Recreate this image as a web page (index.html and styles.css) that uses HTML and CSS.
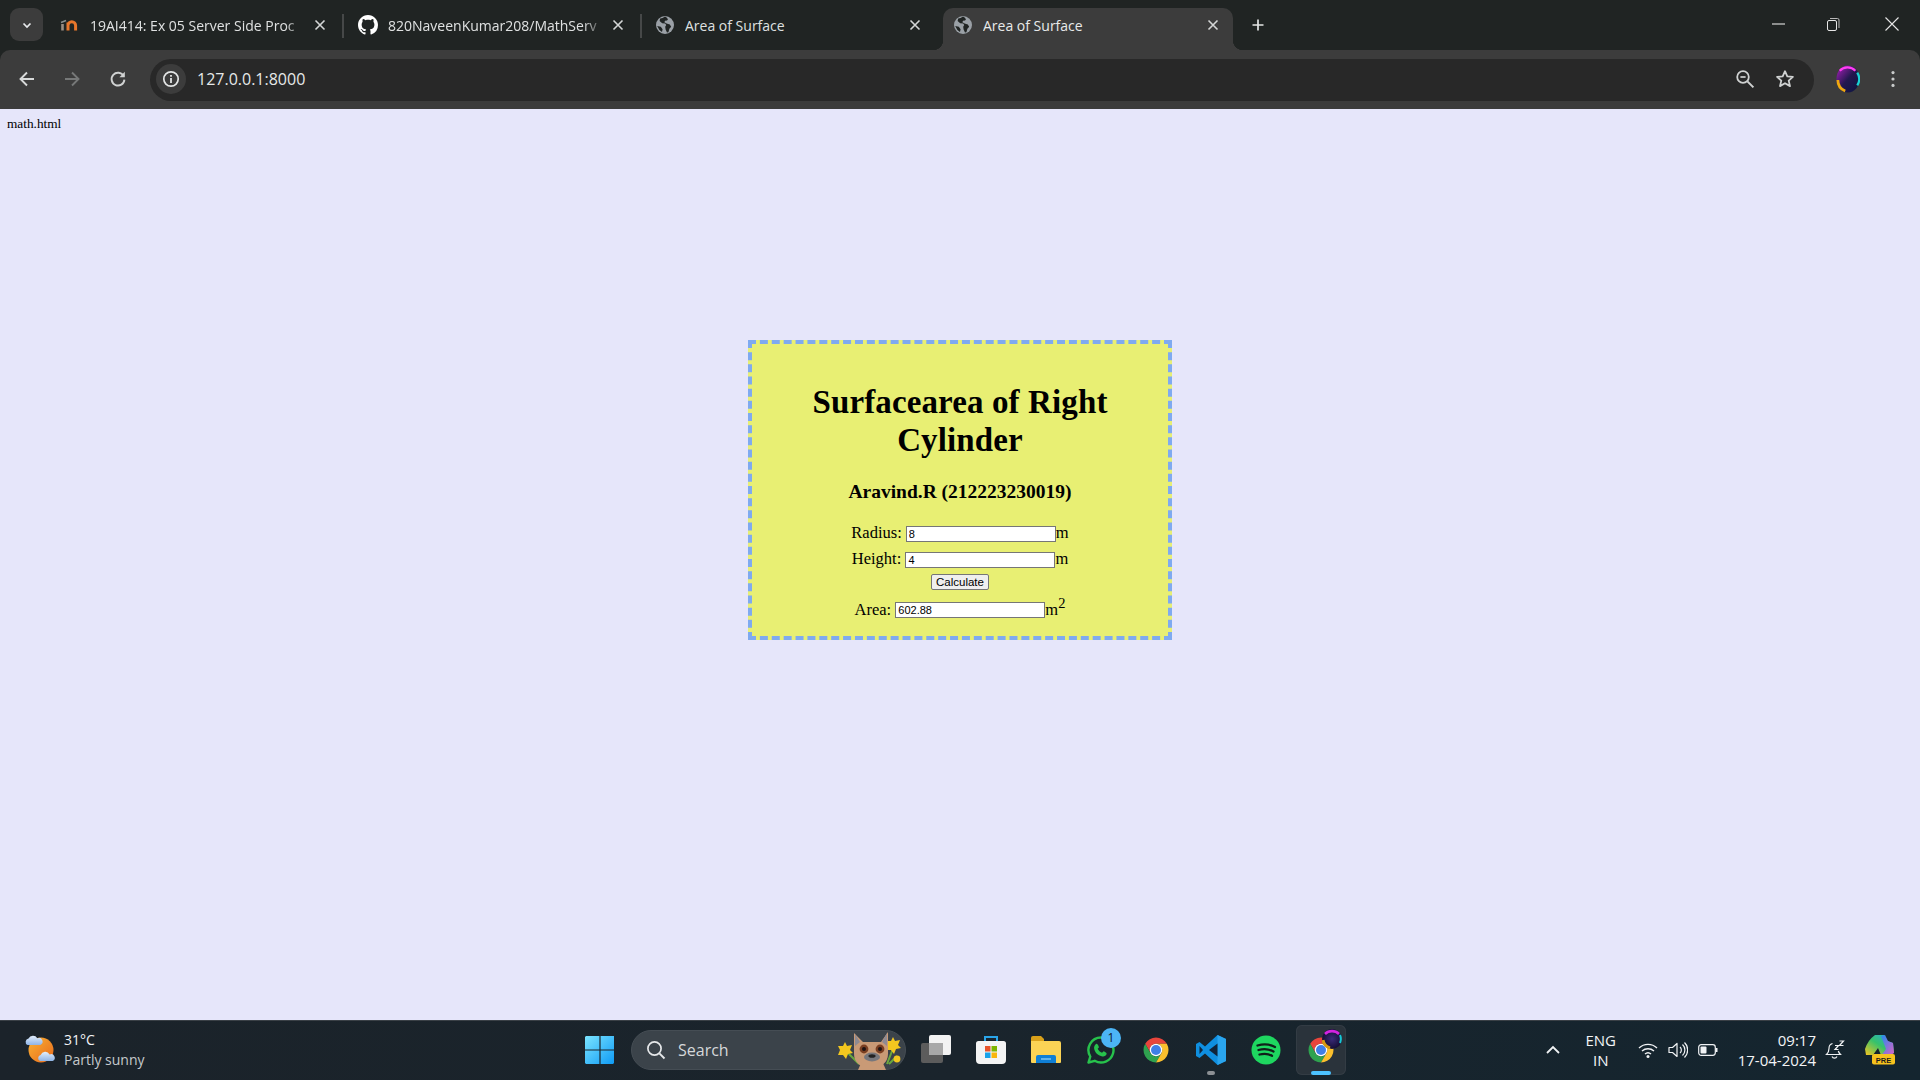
FILE: index.html
```html
<!DOCTYPE html>
<html lang="en">
<head>
<meta charset="utf-8">
<title>Area of Surface</title>
<link rel="stylesheet" href="styles.css">
</head>
<body>
<svg class="defs" width="0" height="0">
  <symbol id="chrome" viewBox="0 0 48 48">
    <path fill="#e8453c" d="M6.68 14A20 20 0 0 1 41.32 14H24A10 10 0 0 0 15.34 29z"/>
    <path fill="#2fa24f" d="M6.68 14A20 20 0 0 0 24 44L32.66 29A10 10 0 0 1 15.34 29z"/>
    <path fill="#fbc02d" d="M24 44A20 20 0 0 0 41.32 14H24A10 10 0 0 1 32.66 29z"/>
    <circle cx="24" cy="24" r="10" fill="#fff"/>
    <circle cx="24" cy="24" r="8" fill="#3f7fe8"/>
  </symbol>
  <symbol id="globe" viewBox="0 0 20 20">
    <circle cx="10" cy="10" r="9" fill="#9aa0a6"/>
    <path fill="#202423" d="M10 1.6 7.6 3 5.2 3.4 4.6 6l2.6 2.2 3 .2 1 1.6-1 1.8.4 2.6 1.4 3.2 1.4-.4 1-3.4 1.8-2-1.4-2.4-3.2-1-2.2-1.2.6-1.4 2-.2 1-1.4-1.4-1.6zM2.2 11l3.6.8 1.8 2.4-.6 2.8L4.4 15z"/>
  </symbol>
  <symbol id="x" viewBox="0 0 14 14">
    <path d="M2.5 2.5l9 9M11.5 2.5l-9 9" fill="none" stroke="#d4d6d6" stroke-width="1.6"/>
  </symbol>
</svg>

<header class="tabstrip">
  <button class="tab-search" type="button">
    <svg class="ic12" viewBox="0 0 12 12"><path d="M2.5 4.5 6 8l3.500-3.500" fill="none" stroke="#e8eaed" stroke-width="1.7"/></svg>
  </button>
  <div class="tabs">
    <div class="tab tab-shift">
      <svg class="fav" viewBox="0 0 20 20"><path d="M2.500 15.500V9" stroke="#9a8f84" stroke-width="2.600" fill="none"/><path d="M8 15.500V7.500M8 10.500a3.800 3.800 0 0 1 7.600 0v5" stroke="#e8762b" stroke-width="3" fill="none"/><path d="M1 7.500 6 5.500" stroke="#8a8f8f" stroke-width="1.400"/></svg>
      <span class="tab-title tab-fade">19AI414: Ex 05 Server Side Proc</span>
      <svg class="tab-x"><use href="#x"/></svg>
    </div>
    <i class="tab-sep"></i>
    <div class="tab tab-shift">
      <svg class="fav" viewBox="0 0 16 16"><path fill="#fff" d="M8 0C3.58 0 0 3.58 0 8c0 3.54 2.29 6.53 5.47 7.59.4.07.55-.17.55-.38 0-.19-.01-.82-.01-1.49-2.01.37-2.53-.49-2.69-.94-.09-.23-.48-.94-.82-1.13-.28-.15-.68-.52-.01-.53.63-.01 1.08.58 1.23.82.72 1.21 1.87.87 2.33.66.07-.52.28-.87.51-1.07-1.78-.2-3.64-.89-3.64-3.95 0-.87.31-1.59.82-2.15-.08-.2-.36-1.02.08-2.12 0 0 .67-.21 2.2.82.64-.18 1.32-.27 2-.27.68 0 1.36.09 2 .27 1.53-1.04 2.2-.82 2.2-.82.44 1.1.16 1.92.08 2.12.51.56.82 1.27.82 2.15 0 3.07-1.87 3.75-3.65 3.95.29.25.54.73.54 1.48 0 1.07-.01 1.93-.01 2.2 0 .21.15.46.55.38A8.013 8.013 0 0016 8c0-4.42-3.58-8-8-8z"/></svg>
      <span class="tab-title tab-fade">820NaveenKumar208/MathServ</span>
      <svg class="tab-x"><use href="#x"/></svg>
    </div>
    <i class="tab-sep"></i>
    <div class="tab">
      <svg class="fav"><use href="#globe"/></svg>
      <span class="tab-title">Area of Surface</span>
      <svg class="tab-x"><use href="#x"/></svg>
    </div>
    <i class="tab-sep tab-sep-off"></i>
    <div class="tab tab-active">
      <svg class="fav"><use href="#globe"/></svg>
      <span class="tab-title">Area of Surface</span>
      <svg class="tab-x"><use href="#x"/></svg>
    </div>
  </div>
  <svg class="newtab" viewBox="0 0 16 16"><path d="M8 2.500v11M2.500 8h11" stroke="#e3e5e5" stroke-width="1.700" fill="none"/></svg>
  <div class="winctl">
    <svg class="win win-min" viewBox="0 0 16 16"><path d="M2 8h13" stroke="#e6e6e6" stroke-width="1.100"/></svg>
    <svg class="win win-max" viewBox="0 0 16 16"><rect x="2.500" y="4.500" width="9" height="10" rx="1.500" fill="none" stroke="#e6e6e6" stroke-width="1"/><path d="M5 2.500h7.500a1.500 1.500 0 0 1 1.500 1.500v8" fill="none" stroke="#b8b8b8" stroke-width="1"/></svg>
    <svg class="win win-close" viewBox="0 0 16 16"><path d="M1.500 1.500l13 13M14.500 1.500l-13 13" stroke="#e6e6e6" stroke-width="1.100"/></svg>
  </div>
</header>

<nav class="toolbar">
  <div class="nav-btn"><svg class="ic18" viewBox="0 0 18 18"><path d="M16 9H3M9 2.500 2.500 9 9 15.500" fill="none" stroke="#d7d9d9" stroke-width="1.900"/></svg></div>
  <div class="nav-btn"><svg class="ic18" viewBox="0 0 18 18"><path d="M2 9h13M9 2.500 15.500 9 9 15.500" fill="none" stroke="#767878" stroke-width="1.900"/></svg></div>
  <div class="nav-btn"><svg class="ic18" viewBox="0 0 18 18"><path d="M14.600 6A6.400 6.400 0 1 0 15.400 9.600" fill="none" stroke="#d0d2d2" stroke-width="1.900"/><path d="M15.800 1.800v5.400h-5.400z" fill="#d0d2d2"/></svg></div>
  <div class="omnibox">
    <div class="info-chip"><svg class="ic18" viewBox="0 0 18 18"><circle cx="9" cy="9" r="7.200" fill="none" stroke="#e3e5e5" stroke-width="1.700"/><path d="M9 8v5M9 5v1.800" stroke="#e3e5e5" stroke-width="1.800"/></svg></div>
    <span class="url">127.0.0.1:8000</span>
    <svg class="ic20 omni-zoom" viewBox="0 0 20 20"><circle cx="8" cy="8" r="5.800" fill="none" stroke="#cfd1d1" stroke-width="1.800"/><path d="M5.400 8h5.200" stroke="#cfd1d1" stroke-width="1.700"/><path d="M12.400 12.400 18.400 18.400" stroke="#cfd1d1" stroke-width="2"/></svg>
    <svg class="ic20 omni-star" viewBox="0 0 20 20"><path d="M10 2.200l2.300 5.200 5.600.5-4.200 3.700 1.300 5.500L10 14.200l-5 2.900 1.300-5.500-4.200-3.700 5.600-.5z" fill="none" stroke="#cfd1d1" stroke-width="1.800" stroke-linejoin="round"/></svg>
  </div>
  <svg class="avatar" viewBox="0 0 26 30">
    <defs>
      <linearGradient id="av" x1="0" y1="0" x2="1" y2="1"><stop offset="0" stop-color="#b01fc0"/><stop offset=".5" stop-color="#23184f"/><stop offset="1" stop-color="#0b1540"/></linearGradient>
    </defs>
    <ellipse cx="13" cy="15" rx="12.500" ry="14.500" fill="url(#av)"/>
    <path d="M4 6a12 12 0 0 1 17 0" fill="none" stroke="#ff3df2" stroke-width="2.400"/>
    <path d="M23 8a13 13 0 0 1 0 14" fill="none" stroke="#19d3d6" stroke-width="2.400"/>
    <path d="M2 16a13 13 0 0 0 8 12" fill="none" stroke="#f0a90f" stroke-width="3"/>
  </svg>
  <svg class="kebab" viewBox="0 0 6 24"><circle cx="3" cy="4" r="2" fill="#c8caca"/><circle cx="3" cy="12" r="2" fill="#c8caca"/><circle cx="3" cy="20" r="2" fill="#c8caca"/></svg>
</nav>

<main class="page">
  <p class="filename">math.html</p>
  <section class="card">
    <h1 class="card-title">Surfacearea of Right Cylinder</h1>
    <h2 class="card-author">Aravind.R (212223230019)</h2>
    <form class="form">
      <div class="row">Radius: <input class="field" type="text" value="8">m</div>
      <div class="row">Height: <input class="field" type="text" value="4">m</div>
      <div class="row-btn"><button class="calc" type="button">Calculate</button></div>
      <div class="row row-area">Area: <input class="field" type="text" value="602.88">m<sup class="sq">2</sup></div>
    </form>
  </section>
</main>

<footer class="taskbar">
  <div class="tb-left">
    <svg class="weather" viewBox="0 0 32 32">
      <defs><linearGradient id="sun" x1="0" y1="0" x2="1" y2="1"><stop offset="0" stop-color="#f9b233"/><stop offset="1" stop-color="#e8691c"/></linearGradient>
      <linearGradient id="cloud" x1="0" y1="0" x2="0" y2="1"><stop offset="0" stop-color="#e2eefc"/><stop offset="1" stop-color="#8fb4e6"/></linearGradient></defs>
      <circle cx="17" cy="16" r="12.500" fill="url(#sun)"/>
      <path d="M3.500 11a3.400 3.400 0 0 1 1-6.400 5 5 0 0 1 8.800-.4 3.600 3.600 0 0 1 3 6.800z" fill="url(#cloud)"/>
      <path d="M16 27a3.200 3.200 0 0 1 .6-6 5 5 0 0 1 9-.6 3.400 3.400 0 0 1 3 6.600z" fill="url(#cloud)"/>
    </svg>
    <div class="weather-text"><div class="temp">31°C</div><div class="cond">Partly sunny</div></div>
  </div>
  <div class="tb-center">
    <div class="tb-item">
      <svg class="ic30" viewBox="0 0 30 30"><defs><linearGradient id="win" x1="0" y1="0" x2="1" y2="1"><stop offset="0" stop-color="#7be4ff"/><stop offset="1" stop-color="#0f9bf5"/></linearGradient></defs><path fill="url(#win)" d="M1 1h13.400v13.400H0V2zM15.600 1H29v13.400H15.600zM0 15.600h14.400V29H1l-1-1zM15.600 15.600H29V28l-1 1H15.600z"/></svg>
    </div>
    <div class="searchbox">
      <svg class="search-ic" viewBox="0 0 20 20"><circle cx="8.500" cy="8.500" r="6.600" fill="none" stroke="#e6e8ea" stroke-width="1.700"/><path d="M13.400 13.400 18.500 18.500" stroke="#e6e8ea" stroke-width="1.900"/></svg>
      <span class="search-text">Search</span>
      <svg class="search-art" viewBox="0 0 66 40">
        <path d="M10 22l12 12M57 16l-7 18M60 26l-8 8" stroke="#6aa83e" stroke-width="2" fill="none"/>
        <path d="M8 12l2 4 5-1-2 5 3 3-5 1-2 5-3-4-5 0 2-5-2-4 5 0z" fill="#f3c71f"/>
        <path d="M56 7l2 4 5-1-2 5 3 3-5 1-2 5-3-4-5 0 2-5-2-4 5 0z" fill="#f3c71f"/>
        <circle cx="60" cy="29" r="3.400" fill="#f3c71f"/>
        <path d="M17 3l9 9h18l7-10v22a17 15 0 0 1-34 0z" fill="#c99a76"/>
        <path d="M18 4l5 8-5 4zM50 3l-5 9 5 4z" fill="#8e8a92"/>
        <path d="M21 40l4-9h20l4 9z" fill="#c99a76"/>
        <circle cx="27" cy="19" r="4.400" fill="#7a3f22"/><circle cx="43" cy="19" r="4.400" fill="#7a3f22"/>
        <circle cx="27" cy="19" r="2" fill="#1d1414"/><circle cx="43" cy="19" r="2" fill="#1d1414"/>
        <ellipse cx="35" cy="27" rx="8" ry="4.400" fill="#77777c"/><ellipse cx="35" cy="26" rx="3.600" ry="1.800" fill="#222"/>
      </svg>
    </div>
    <div class="tb-item">
      <svg class="ic30" viewBox="0 0 30 30"><rect x="0" y="8" width="22" height="20" rx="2" fill="#5c5c5c"/><rect x="8" y="0" width="22" height="20" rx="2" fill="#f2f2f2"/><rect x="8" y="8" width="14" height="12" fill="#a8a8a8"/></svg>
    </div>
    <div class="tb-item">
      <svg class="ic30" viewBox="0 0 30 30"><path d="M9 7V2h12v5" fill="none" stroke="#29a4e8" stroke-width="2"/><path d="M0 8.500A2.500 2.500 0 0 1 2.500 6h25A2.500 2.500 0 0 1 30 8.500V25a4 4 0 0 1-4 4H4a4 4 0 0 1-4-4z" fill="#f4f4f4"/><rect x="9" y="11" width="5.500" height="5.500" fill="#e8542b"/><rect x="15.500" y="11" width="5.500" height="5.500" fill="#7db500"/><rect x="9" y="17.500" width="5.500" height="5.500" fill="#1aa3ea"/><rect x="15.500" y="17.500" width="5.500" height="5.500" fill="#f9b60d"/></svg>
    </div>
    <div class="tb-item">
      <svg class="ic30" viewBox="0 0 30 30"><path d="M0 3a2 2 0 0 1 2-2h8l3 3v4H0z" fill="#d9a11a"/><path d="M0 6h28a2 2 0 0 1 2 2v19a1 1 0 0 1-1 1H1a1 1 0 0 1-1-1z" fill="#fbd355"/><path d="M5 28v-6a2 2 0 0 1 2-2h16a2 2 0 0 1 2 2v6z" fill="#0f7fd6"/><path d="M10 24h10" stroke="#7cc4f5" stroke-width="1.500"/></svg>
    </div>
    <div class="tb-item">
      <svg class="ic30" viewBox="0 0 30 30"><path d="M15 2.500a12.500 12.500 0 0 0-10.700 19L2.500 27.500l6.200-1.700A12.500 12.500 0 1 0 15 2.500z" fill="none" stroke="#27c24c" stroke-width="2.400" stroke-linejoin="round"/><path d="M10 9c1.500-1 2.500 2 3 3.200l-1.300 1.600c.8 1.800 2.400 3.200 4.300 4l1.600-1.500c1.500.6 3.300 1.500 3 2.700-.5 2-2.800 2.800-5 2.200C12 20.500 9 17.500 8.200 14 7.800 12 8.500 10 10 9z" fill="#27c24c"/></svg>
      <span class="badge">1</span>
    </div>
    <div class="tb-item"><svg class="ic30"><use href="#chrome"/></svg></div>
    <div class="tb-item tb-running">
      <svg class="ic30" viewBox="0 0 30 30"><path d="M21.500 0 30 4v22l-8.500 4L9 18.500 3.500 23 0 21v-12l3.500-2L9 11.500z" fill="#0f8fe0"/><path d="M21.500 0 30 4v22l-8.500 4z" fill="#2aa5ee"/><path d="M21.500 8.500v13L13 15z" fill="#10243a"/><path d="M3.500 11 7 15l-3.500 4z" fill="#10243a"/></svg>
    </div>
    <div class="tb-item">
      <svg class="ic30" viewBox="0 0 30 30"><circle cx="15" cy="15" r="14.500" fill="#1ed760"/><path d="M6.500 10.500c6-1.800 12.500-1.200 17.500 1.500M7.500 15c5-1.400 10.500-1 15 1.500M8.500 19.500c4.500-1.100 9-.8 12.500 1.300" fill="none" stroke="#10201a" stroke-width="2.300" stroke-linecap="round"/></svg>
    </div>
    <div class="tb-item tb-active">
      <svg class="ic30"><use href="#chrome"/></svg>
      <svg class="chrome-profile" viewBox="0 0 20 20">
        <defs><radialGradient id="orb"><stop offset="0" stop-color="#3a2a78"/><stop offset="1" stop-color="#140e34"/></radialGradient></defs>
        <circle cx="10" cy="10" r="10" fill="url(#orb)"/>
        <path d="M3 5a10 10 0 0 1 14 0" fill="none" stroke="#d323e0" stroke-width="2.600"/>
        <path d="M18 6a10 10 0 0 1 0 8" fill="none" stroke="#17c8d3" stroke-width="2"/>
        <path d="M1 11a10 10 0 0 0 7 8" fill="none" stroke="#d89a12" stroke-width="3"/>
      </svg>
    </div>
  </div>
  <div class="tb-right">
    <svg class="tray-chev" viewBox="0 0 16 16"><path d="M2 11l6-6 6 6" fill="none" stroke="#f0f2f4" stroke-width="1.800"/></svg>
    <div class="lang"><div>ENG</div><div>IN</div></div>
    <svg class="tray-ic tray-wifi" viewBox="0 0 20 20"><path d="M1 8a13 13 0 0 1 18 0M4 11a9 9 0 0 1 12 0M7 14a4.500 4.500 0 0 1 6 0" fill="none" stroke="#f0f2f4" stroke-width="1.400"/><circle cx="10" cy="16.500" r="1.500" fill="#f0f2f4"/></svg>
    <svg class="tray-ic tray-sp" viewBox="0 0 20 20"><path d="M1 7.500h3.500L9 3.500v13l-4.500-4H1z" fill="none" stroke="#f0f2f4" stroke-width="1.200" stroke-linejoin="round"/><path d="M12 7a4 4 0 0 1 0 6M14.500 4.500a7.500 7.500 0 0 1 0 11M16.500 2.500a10.500 10.500 0 0 1 0 15" fill="none" stroke="#f0f2f4" stroke-width="1.200"/></svg>
    <svg class="tray-ic tray-sp" viewBox="0 0 20 20"><rect x=".7" y="4.700" width="16.600" height="10.600" rx="2.500" fill="none" stroke="#f0f2f4" stroke-width="1.200"/><rect x="2.500" y="6.500" width="6" height="7" rx="1" fill="#f0f2f4"/><path d="M18.500 8v4" stroke="#f0f2f4" stroke-width="2"/></svg>
    <div class="clock"><div>09:17</div><div>17-04-2024</div></div>
    <svg class="tray-ic tray-bell" viewBox="0 0 20 20"><path d="M7.500 3.500A5 5 0 0 0 4 8.500c0 3.500-1 4.500-2.500 6h14c-1-1-1.800-2-2.200-3.500M7 16.500a2.800 2.800 0 0 0 5 0" fill="none" stroke="#f0f2f4" stroke-width="1.200"/><path d="M10 5.500h3.500l-3.500 4h3.500M14.500 1h4l-4 4.500h4" fill="none" stroke="#f0f2f4" stroke-width="1.200"/></svg>
    <svg class="copilot" viewBox="0 0 30 30">
      <defs>
        <linearGradient id="cp1" x1="0" y1="1" x2="1" y2="0"><stop offset="0" stop-color="#f6c51f"/><stop offset=".5" stop-color="#36c26b"/><stop offset="1" stop-color="#26a6e6"/></linearGradient>
        <linearGradient id="cp2" x1="0" y1="0" x2="1" y2="1"><stop offset="0" stop-color="#1f8df0"/><stop offset="1" stop-color="#e25fc4"/></linearGradient>
      </defs>
      <path d="M10 0h9l3 6 6 2 1 10-5 2h-8l-3-7-5 7H1L0 14Q3 5 10 0z" fill="url(#cp1)"/>
      <path d="M16 1 20 0l3 6 5 2 1 10-5 3h-8l5-7z" fill="url(#cp2)"/>
      <rect x="7" y="19" width="23" height="10.500" rx="2" fill="#f7c21d"/>
      <text class="pre-text" x="18.500" y="27.500" text-anchor="middle">PRE</text>
    </svg>
  </div>
</footer>
</body>
</html>
```

FILE: styles.css
```css
* { box-sizing: border-box; }
html, body { margin: 0; height: 100%; }
body {
  display: flex;
  flex-direction: column;
  height: 100vh;
  overflow: hidden;
  background: #202423;
  font-family: "Open Sans", "Noto Sans", sans-serif;
}
.defs { position: absolute; }
svg { display: block; flex: none; }

/* tab strip */
.tabstrip {
  height: 50px;
  flex: none;
  display: flex;
  align-items: flex-start;
  background: #202423;
  padding: 8px 20px 0 10px;
  color: #dfe1e1;
}
.tab-search {
  width: 33px;
  height: 33px;
  border: 0;
  padding: 0;
  border-radius: 9px;
  background: #3c3c3c;
  display: flex;
  align-items: center;
  justify-content: center;
  margin-right: 6px;
}
.ic12 { width: 12px; height: 12px; }
.tabs { display: flex; align-items: flex-start; }
.tab {
  position: relative;
  width: 290px;
  height: 42px;
  display: flex;
  align-items: center;
  padding: 0 13px 8px 10px;
  border-radius: 10px 10px 0 0;
  font-size: 14px;
  z-index: 1;
}
.tab-shift { padding-left: 11px; padding-right: 12px; }
.tab-active { background: #3c3c3c; color: #e8eaea; }
.tab-active::before,
.tab-active::after {
  content: "";
  position: absolute;
  bottom: 0;
  width: 10px;
  height: 10px;
}
.tab-active::before { left: -10px; background: radial-gradient(circle at 0 0, transparent 10px, #3c3c3c 10.5px); }
.tab-active::after { right: -10px; background: radial-gradient(circle at 100% 0, transparent 10px, #3c3c3c 10.5px); }
.fav { width: 20px; height: 20px; margin-right: 10px; }
.tab-title {
  flex: 1;
  min-width: 0;
  white-space: nowrap;
  overflow: hidden;
}
.tab-fade {
  -webkit-mask-image: linear-gradient(to right, #000 90%, transparent 100%);
  mask-image: linear-gradient(to right, #000 90%, transparent 100%);
}
.tab-x { width: 14px; height: 14px; margin-left: 6px; }
.tab-sep { width: 2px; height: 24px; margin: 6px 3px 0; background: #464848; }
.tab-sep-off { background: transparent; }
.newtab { width: 16px; height: 16px; margin: 9px 0 0 17px; }
.winctl { margin-left: auto; display: flex; align-items: center; height: 32px; }
.win { width: 16px; height: 16px; }
.win-max { margin-left: 39px; }
.win-close { margin-left: 43px; }

/* toolbar */
.toolbar {
  height: 59px;
  flex: none;
  display: flex;
  align-items: center;
  padding: 0 0 0 4px;
  background: #3c3c3c;
  border-radius: 10px 10px 0 0;
}
.nav-btn { width: 45.5px; display: flex; justify-content: center; margin-top: -1px; }
.ic18 { width: 18px; height: 18px; }
.ic20 { width: 20px; height: 20px; }
.omnibox {
  width: 1664px;
  height: 42px;
  margin-left: 9.5px;
  display: flex;
  align-items: center;
  padding: 0 19px 1px 6px;
  border-radius: 21px;
  background: #282828;
}
.info-chip {
  width: 30px;
  height: 30px;
  border-radius: 50%;
  background: #3c3c3c;
  display: flex;
  align-items: center;
  justify-content: center;
}
.url { margin-left: 11px; font-size: 16px; color: #e6e8e8; flex: 1; }
.omni-star { margin-left: 20px; }
.avatar { width: 24px; height: 28px; margin: -2px 0 0 22px; }
.kebab { width: 6px; height: 24px; margin: -1px 0 0 30px; transform: scale(.8); }

/* page */
.page {
  flex: 1;
  min-height: 0;
  padding: 8px 7px;
  background: #e6e6fa;
  font-family: "Liberation Serif", serif;
  color: #000;
}
.filename { margin: 0; font-size: 13.3px; line-height: 14px; }
.card {
  width: 424px;
  height: 300px;
  margin: 209px auto 0;
  border: 4px dashed #7faaf0;
  background: #e8ef73;
  padding: 38.5px 30px 0;
  text-align: center;
}
.card-title { margin: 0; font-size: 33px; line-height: 38px; font-weight: 700; letter-spacing: .12px; }
.card-author { margin: 21px 0 0; font-size: 19.5px; line-height: 24px; font-weight: 700; }
.form { margin: 16.5px 0 0; }
.row { font-size: 16.5px; line-height: 26px; white-space: nowrap; }
.row-area { margin-top: 4.5px; }
.field {
  width: 150px;
  height: 16px;
  padding: 0 2px;
  margin: 0;
  border: 1px solid #767676;
  border-radius: 0;
  background: #fff;
  font-family: "Liberation Sans", sans-serif;
  font-size: 11px;
  color: #000;
  vertical-align: .5px;
}
.row-btn { display: flex; justify-content: center; height: 20px; align-items: center; }
.calc {
  width: 58px;
  height: 16px;
  padding: 0;
  border: 1px solid #767676;
  border-radius: 2px;
  background: #efefef;
  font-family: "Liberation Sans", sans-serif;
  font-size: 11.5px;
  color: #000;
}
.sq { font-size: 14.5px; line-height: 0; vertical-align: 7px; }

/* taskbar */
.taskbar {
  height: 60px;
  flex: none;
  display: grid;
  grid-template-columns: 575px auto 1fr;
  align-items: center;
  padding-bottom: 1px;
  background: linear-gradient(to right, #1b232a, #1a242c 50%, #14252f);
  border-top: 1px solid #3a4046;
  color: #f2f4f6;
}
.tb-left { display: flex; align-items: center; padding-left: 24px; }
.weather { width: 32px; height: 32px; }
.weather-text { margin-left: 8px; font-size: 14px; line-height: 20px; }
.temp { color: #f2f4f6; }
.cond { color: #c5c9cc; }
.tb-center { display: flex; align-items: center; gap: 5px; }
.tb-item {
  position: relative;
  width: 50px;
  height: 50px;
  display: flex;
  align-items: center;
  justify-content: center;
  border-radius: 6px;
}
.ic30 { width: 30px; height: 30px; }
.searchbox {
  width: 275px;
  height: 40px;
  margin-left: 1px;
  display: flex;
  align-items: center;
  padding-left: 14px;
  border-radius: 20px;
  border: 1px solid #454d54;
  background: #3b434a;
}
.search-ic { width: 20px; height: 20px; }
.search-text { margin-left: 12px; font-size: 16px; color: #d5d8da; }
.search-art { width: 66px; height: 40px; margin-left: auto; margin-right: 2px; }
.badge {
  position: absolute;
  top: 3px;
  right: 5px;
  width: 20px;
  height: 20px;
  border-radius: 50%;
  background: #4cb5f5;
  color: #10202c;
  font-size: 12px;
  line-height: 20px;
  text-align: center;
}
.tb-running::after {
  content: "";
  position: absolute;
  bottom: 0;
  left: 21px;
  width: 8px;
  height: 4px;
  border-radius: 2px;
  background: #8c9094;
}
.tb-active { background: #2a333b; box-shadow: inset 0 0 0 1px #333c44; }
.tb-active::after {
  content: "";
  position: absolute;
  bottom: 0;
  left: 15px;
  width: 20px;
  height: 4px;
  border-radius: 2px;
  background: #4cc2ff;
}
.chrome-profile { position: absolute; top: 4px; right: 4px; width: 20px; height: 20px; }
.tb-right { display: flex; align-items: center; justify-content: flex-end; padding-right: 25px; }
.tray-chev { width: 16px; height: 16px; }
.lang { width: 40px; margin-left: 20px; text-align: center; font-size: 15px; line-height: 20px; }
.tray-ic { width: 20px; height: 20px; }
.tray-wifi { margin-left: 17px; }
.tray-sp { margin-left: 10px; }
.clock { margin-left: 20px; text-align: right; font-size: 15px; line-height: 20px; white-space: nowrap; }
.tray-bell { margin-left: 9px; }
.copilot { width: 30px; height: 30px; margin-left: 20px; }
.pre-text { font-family: "Liberation Sans", sans-serif; font-size: 7.5px; font-weight: 700; fill: #1c1c1c; }
```
